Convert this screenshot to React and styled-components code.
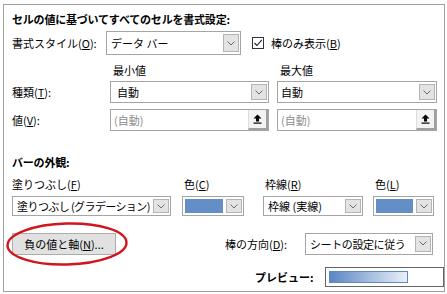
import React from "react";
import styled, { createGlobalStyle } from "styled-components";

const Global = createGlobalStyle`
  body {
    margin: 0;
    background: #fff;
    font-family: "Noto Sans CJK JP", "Noto Sans", sans-serif;
  }
`;

const Frame = styled.div`
  margin: 4px 0 0 3px;
  width: 442px;
  height: 288px;
  box-sizing: border-box;
  border: 1px solid #a0a0a0;
  padding: 6px 0 0 8px;
  font-size: 11px;
  color: #000;
`;

const Row = styled.div`
  display: flex;
  align-items: center;
  height: ${(p) => p.h}px;
  margin-top: ${(p) => p.mt || 0}px;
`;

const Title = styled.div`
  font-weight: bold;
  letter-spacing: -0.2px;
  line-height: 16px;
`;

const Label = styled.span`
  flex: none;
  width: ${(p) => (p.w ? `${p.w}px` : "auto")};
  margin-left: ${(p) => p.ml || 0}px;
  white-space: nowrap;
  font-weight: ${(p) => (p.bold ? "bold" : "normal")};
`;

const Box = styled.div`
  flex: none;
  display: flex;
  align-items: center;
  box-sizing: border-box;
  width: ${(p) => p.w}px;
  height: ${(p) => p.h || 22}px;
  margin-left: ${(p) => p.ml || 0}px;
  padding-left: ${(p) => (p.pl == null ? 4 : p.pl)}px;
  border: 1px solid #a5a5a5;
  background: #fff;
  white-space: nowrap;
  color: ${(p) => (p.muted ? "#8c8c8c" : "#000")};
`;

const Text = styled.span`
  flex: 1;
  overflow: hidden;
  letter-spacing: ${(p) => p.ls || 0}px;
`;

const ArrowBtn = styled.div`
  flex: none;
  width: 16px;
  height: calc(100% - 4px);
  margin-right: 1px;
  box-sizing: border-box;
  background: #e3e3e3;
  border: 1px solid #b4b4b4;
  display: flex;
  align-items: center;
  justify-content: center;
`;

const RefBtn = styled.div`
  flex: none;
  width: 20px;
  height: 100%;
  box-sizing: border-box;
  background: #f3f3f3;
  border-left: 1px solid #dcdcdc;
  border-right: 2px solid #a0a0a0;
  border-bottom: 2px solid #a0a0a0;
  display: flex;
  align-items: center;
  justify-content: center;
`;

const Swatch = styled.div`
  flex: 1;
  height: calc(100% - 4px);
  margin-right: 3px;
  background: #638ec6;
`;

const Check = styled.div`
  flex: none;
  width: 12px;
  height: 12px;
  box-sizing: border-box;
  margin-left: ${(p) => p.ml || 0}px;
  border: 1px solid #333;
  background: #fff;
  display: flex;
  align-items: center;
  justify-content: center;
`;

const ButtonWrap = styled.div`
  position: relative;
  flex: none;
`;

const Button = styled.div`
  width: 104px;
  height: 22px;
  box-sizing: border-box;
  background: #e1e1e1;
  border: 1px solid #adadad;
  display: flex;
  align-items: center;
  justify-content: center;
  white-space: nowrap;
`;

const Ellipse = styled.svg`
  position: absolute;
  left: -6px;
  top: -12px;
  overflow: visible;
  pointer-events: none;
`;

const Preview = styled.div`
  flex: none;
  width: 119px;
  height: 20px;
  box-sizing: border-box;
  margin-left: ${(p) => p.ml || 0}px;
  border: 1px solid #646464;
  background: #fff;
  padding: 3px 3px;
`;

const PreviewBar = styled.div`
  width: 79px;
  height: 100%;
  box-sizing: border-box;
  border: 1px solid #5f89c4;
  background: linear-gradient(to right, #5b86c3, #eaf0f9);
`;

const Chevron = () => (
  <svg width="8" height="5" viewBox="0 0 8 5">
    <path d="M0.5 0.5 L4 4 L7.5 0.5" fill="none" stroke="#6a6a6a" strokeWidth="1" />
  </svg>
);

const UpArrow = () => (
  <svg width="9" height="10" viewBox="0 0 9 10">
    <path d="M4.5 0.5 L8.5 4.5 L6 4.5 L6 7.5 L3 7.5 L3 4.5 L0.5 4.5 Z" fill="#000" />
    <rect x="0.5" y="8.5" width="8" height="1.2" fill="#000" />
  </svg>
);

const Select = ({ w, h, ml, pl, ls, children }) => (
  <Box w={w} h={h} ml={ml} pl={pl}>
    <Text ls={ls}>{children}</Text>
    <ArrowBtn>
      <Chevron />
    </ArrowBtn>
  </Box>
);

const RefInput = ({ w, ml }) => (
  <Box w={w} ml={ml} pl={3} muted>
    <Text>(自動)</Text>
    <RefBtn>
      <UpArrow />
    </RefBtn>
  </Box>
);

const ColorPick = ({ w, ml }) => (
  <Box w={w} h={20} ml={ml} pl={2}>
    <Swatch />
    <ArrowBtn>
      <Chevron />
    </ArrowBtn>
  </Box>
);

export default function App() {
  return (
    <>
      <Global />
      <Frame>
        <Title>セルの値に基づいてすべてのセルを書式設定:</Title>

        <Row h={24} mt={4}>
          <Label w={94}>
            書式スタイル(<u>O</u>):
          </Label>
          <Select w={135} h={24} pl={4}>データ バー</Select>
          <Check ml={11}>
            <svg width="10" height="10" viewBox="0 0 10 10">
              <path d="M1.5 5 L4 7.5 L8.8 1.8" fill="none" stroke="#222" strokeWidth="1.1" />
            </svg>
          </Check>
          <Label ml={7}>
            棒のみ表示(<u>B</u>)
          </Label>
        </Row>

        <Row h={18} mt={6}>
          <Label w={101} />
          <Label w={167}>最小値</Label>
          <Label>最大値</Label>
        </Row>

        <Row h={22} mt={2}>
          <Label w={98}>
            種類(<u>T</u>):
          </Label>
          <Select w={159} pl={6}>自動</Select>
          <Select w={160} ml={8} pl={3}>自動</Select>
        </Row>

        <Row h={22} mt={6}>
          <Label w={98}>
            値(<u>V</u>):
          </Label>
          <RefInput w={159} />
          <RefInput w={160} ml={8} />
        </Row>

        <Row h={16} mt={23}>
          <Title>バーの外観:</Title>
        </Row>

        <Row h={16} mt={6}>
          <Label w={172}>
            塗りつぶし(<u>F</u>)
          </Label>
          <Label w={81}>
            色(<u>C</u>)
          </Label>
          <Label w={110}>
            枠線(<u>R</u>)
          </Label>
          <Label>
            色(<u>L</u>)
          </Label>
        </Row>

        <Row h={20} mt={4}>
          <Select w={159} h={20} pl={4} ls={-0.6}>
            塗りつぶし (グラデーション)
          </Select>
          <ColorPick w={62} ml={11} />
          <Select w={100} h={20} ml={19} pl={4}>枠線 (実線)</Select>
          <ColorPick w={61} ml={10} />
        </Row>

        <Row h={23} mt={16}>
          <ButtonWrap>
            <Button>
              負の値と軸(<u>N</u>)...
            </Button>
            <Ellipse width="122" height="44" viewBox="0 0 122 44">
              <ellipse
                cx="61"
                cy="23"
                rx="59.5"
                ry="20.5"
                fill="none"
                stroke="#d0151f"
                strokeWidth="2.4"
                transform="rotate(-1.5 61 23)"
              />
            </Ellipse>
          </ButtonWrap>
          <Label w={80} ml={109}>
            棒の方向(<u>D</u>):
          </Label>
          <Select w={128} h={22} pl={4} ls={-0.4}>
            シートの設定に従う
          </Select>
        </Row>

        <Row h={20} mt={12}>
          <Label bold ml={243}>
            プレビュー:
          </Label>
          <Preview ml={11}>
            <PreviewBar />
          </Preview>
        </Row>
      </Frame>
    </>
  );
}
